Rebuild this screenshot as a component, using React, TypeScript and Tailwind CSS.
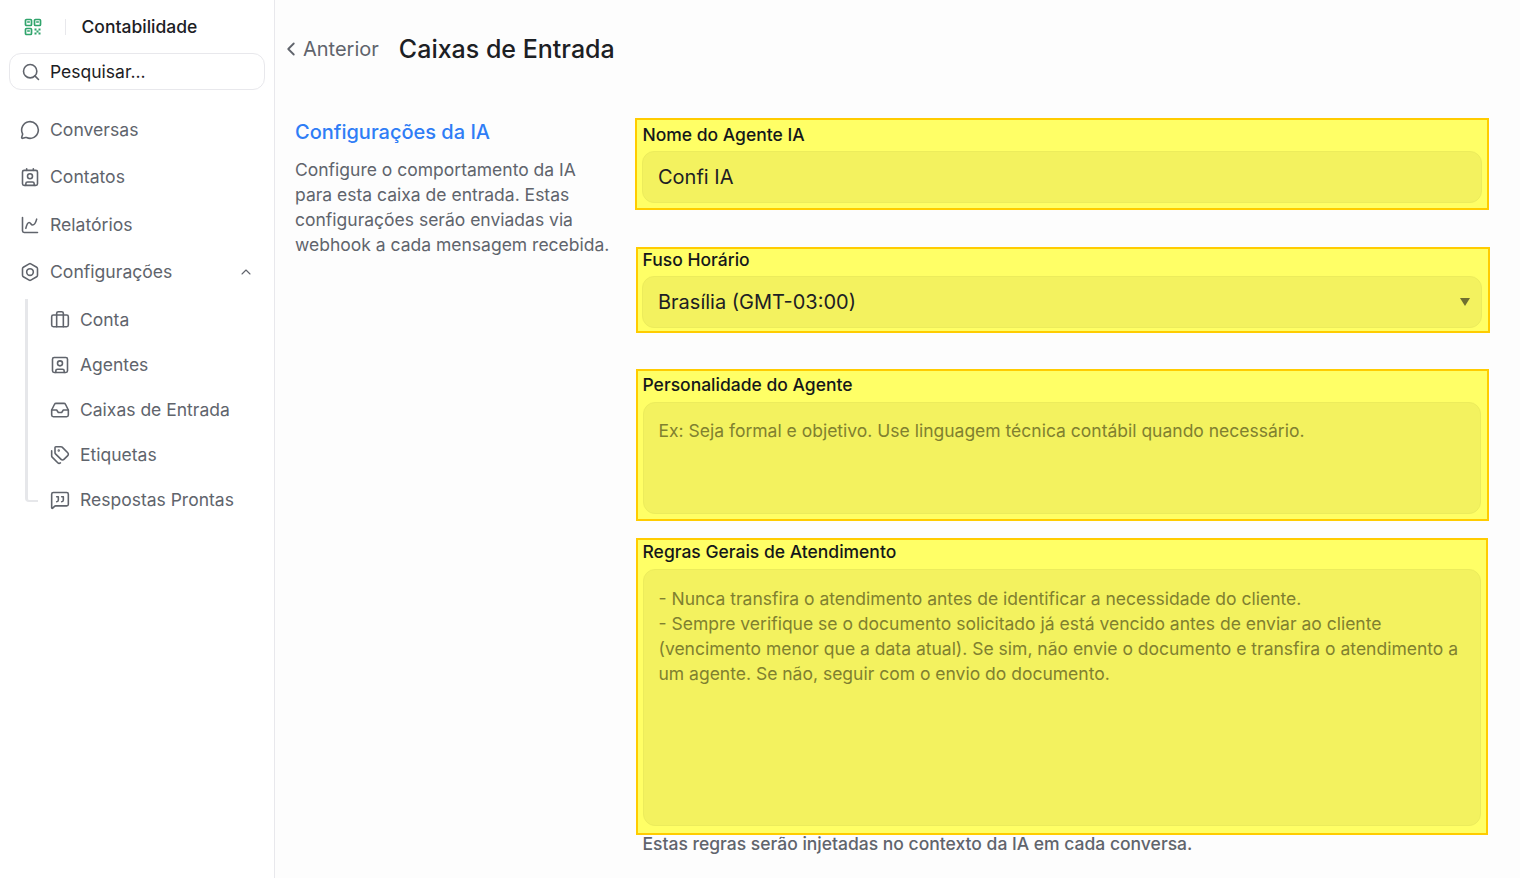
import { Bolt, Briefcase, ChartSpline, ChevronLeft, ChevronUp, Contact, Inbox, MessageCircle, MessageSquareQuote, Search, SquareUser, Tags } from "lucide-react";
import type { ComponentType, ReactNode } from "react";

type IconT = ComponentType<{ size?: number; strokeWidth?: number; className?: string }>;

function NavItem({ icon: Icon, label, right }: { icon: IconT; label: string; right?: ReactNode }) {
  return (
    <div className="flex items-center h-[47.5px] pl-[20px] pr-[20px] text-[#60646c] text-[17.6px]">
      <Icon size={20} strokeWidth={1.9} className="mr-[10px] text-[#60646c] shrink-0" />
      <span className="flex-1">{label}</span>
      {right}
    </div>
  );
}

function SubItem({ icon: Icon, label }: { icon: IconT; label: string }) {
  return (
    <div className="flex items-center h-[45px] pl-[50px] text-[#60646c] text-[17.5px]">
      <Icon size={20} strokeWidth={1.9} className="mr-[10px] -mt-[1px] text-[#60646c] shrink-0" />
      <span>{label}</span>
    </div>
  );
}

function QrMark() {
  return (
    <svg width="18" height="18" viewBox="0 0 18 18" fill="none" stroke="#30a46c" strokeWidth="1.7">
      <rect x="1.5" y="1.5" width="6" height="6" rx="1" />
      <rect x="10.5" y="1.5" width="6" height="6" rx="1" />
      <rect x="1.5" y="10.5" width="6" height="6" rx="1" />
      <path d="M4 4h1M13 4h1M4 13h1" strokeLinecap="square" />
      <path d="M10.5 10.5h2v2h-2zM14.5 10.5h2v2h-2zM12.5 12.5h2v2h-2zM10.5 14.5h2v2h-2zM14.5 14.5h2v2h-2z" fill="#30a46c" stroke="none" />
    </svg>
  );
}

function Box({ className, children }: { className: string; children: ReactNode }) {
  return <div className={"border-2 border-[#ffcc00] bg-[#ffff66] " + className}>{children}</div>;
}

function Label({ className, children }: { className: string; children: ReactNode }) {
  return <div className={"text-[17.5px] font-medium leading-[26px] text-[#14171a] " + className}>{children}</div>;
}

export default function App() {
  return (
    <div className="flex h-[878px] w-[1520px] overflow-hidden bg-[#fdfdfd] text-[#1c2024]" style={{ fontFamily: "Inter, 'Liberation Sans', sans-serif" }}>
      <aside className="w-[275px] shrink-0 border-r border-[#e8e8ec] bg-white flex flex-col">
        <div className="flex items-center h-[53px] pl-[24px]">
          <QrMark />
          <div className="h-[16px] w-px bg-[#e8e8ec] ml-[23px] mr-[15.5px]" />
          <span className="text-[17.5px] font-medium text-[#1c2024] mt-[2px]">Contabilidade</span>
        </div>
        <div className="mx-[9px] w-[256px] h-[37px] border border-[#e8e8ec] rounded-[12px] flex items-center pl-[11px] text-[17.5px] text-[#1c2024]">
          <Search size={20} strokeWidth={1.9} className="mr-[9px] text-[#60646c]" />
          <span className="mt-[2px]">Pesquisar...</span>
        </div>
        <div className="mt-[16px]">
          <NavItem icon={MessageCircle} label="Conversas" />
          <NavItem icon={Contact} label="Contatos" />
          <NavItem icon={ChartSpline} label="Relatórios" />
          <NavItem icon={Bolt} label="Configurações" right={<ChevronUp size={16} strokeWidth={1.6} className="text-[#60646c] -mt-[1px]" />} />
        </div>
        <div className="relative mt-[2px]">
          <div className="absolute left-[25px] top-[1px] h-[203px] w-[13px] border-l-[3px] border-b-[2px] border-[#e6e7ea] rounded-bl-[4px]" />
          <SubItem icon={Briefcase} label="Conta" />
          <SubItem icon={SquareUser} label="Agentes" />
          <SubItem icon={Inbox} label="Caixas de Entrada" />
          <SubItem icon={Tags} label="Etiquetas" />
          <SubItem icon={MessageSquareQuote} label="Respostas Prontas" />
        </div>
      </aside>
      <main className="flex-1 min-w-0">
        <header className="flex items-center h-[98px] pl-[5px]">
          <ChevronLeft size={22} strokeWidth={2} className="text-[#60646c]" />
          <span className="text-[20px] text-[#60646c] ml-[1px]">Anterior</span>
          <h1 className="text-[25px] font-medium ml-[20px] mt-[2px] text-[#1c2024]">Caixas de Entrada</h1>
        </header>
        <div className="flex pt-[20px]">
          <div className="w-[360px] pl-[20px] pr-[20px] shrink-0">
            <h2 className="text-[20px] font-medium text-[#2f7df6] leading-[28px]">Configurações da IA</h2>
            <p className="mt-[11px] text-[17.5px] leading-[25px] text-[#60646c]">Configure o comportamento da IA para esta caixa de entrada. Estas configurações serão enviadas via webhook a cada mensagem recebida.</p>
          </div>
          <div className="flex-1 min-w-0 pr-[30px]">
            <Box className="h-[92px] mr-[1px] pt-[2px] pl-[5px] pr-[5px]">
              <Label className="ml-[0.5px]">Nome do Agente IA</Label>
              <div className="mt-[3px] h-[52px] rounded-[12px] bg-[#f3f25f] border border-[#ecec5c] text-[20px] flex items-center px-[15px]"><span>Confi IA</span></div>
            </Box>
            <Box className="h-[86px] mt-[37px] ml-[1px] pl-[4px] pr-[6px]">
              <Label className="ml-[0.5px] -mt-[2px]">Fuso Horário</Label>
              <div className="mt-[3px] h-[52px] rounded-[12px] bg-[#f3f25f] border border-[#ecec5c] text-[20px] flex items-center justify-between pl-[15px] pr-[11px]">
                <span>Brasília (GMT-03:00)</span>
                <svg width="10" height="8" viewBox="0 0 10 8" className="fill-[#6f6f30]"><path d="M0 0h10L5 8z" /></svg>
              </div>
            </Box>
            <Box className="h-[152px] mt-[36px] ml-[1px] mr-[1px] pl-[4.5px] pr-[6px]">
              <Label className="mt-[1px]">Personalidade do Agente</Label>
              <div className="mt-[4px] ml-[0.5px] h-[112px] rounded-[12px] bg-[#f3f25f] border border-[#ecec5c] text-[17.5px] leading-[25px] text-[#80802f] pt-[15px] pl-[14.5px] pr-[15px]">Ex: Seja formal e objetivo. Use linguagem técnica contábil quando necessário.</div>
            </Box>
            <Box className="h-[297px] mt-[17px] ml-[1px] mr-[2px] pl-[4.5px] pr-[5px]">
              <Label className="-mt-[1px]">Regras Gerais de Atendimento</Label>
              <div className="mt-[4px] ml-[0.5px] h-[257px] rounded-[12px] bg-[#f3f25f] border border-[#ecec5c] text-[17.5px] leading-[25px] text-[#80802f] pt-[16px] pl-[14.5px] pr-[15px]">
                <div>- Nunca transfira o atendimento antes de identificar a necessidade do cliente.</div>
                <div>- Sempre verifique se o documento solicitado já está vencido antes de enviar ao cliente (vencimento menor que a data atual). Se sim, não envie o documento e transfira o atendimento a um agente. Se não, seguir com o envio do documento.</div>
              </div>
            </Box>
            <p className="ml-[7.5px] mt-[-4px] text-[17.5px] font-medium leading-[25px] text-[#60646c]">Estas regras serão injetadas no contexto da IA em cada conversa.</p>
          </div>
        </div>
      </main>
    </div>
  );
}
